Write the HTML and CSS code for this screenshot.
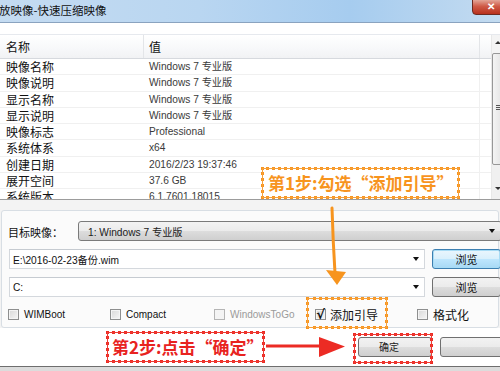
FILE: index.html
```html
<!DOCTYPE html>
<html>
<head>
<meta charset="utf-8">
<link rel="stylesheet" href="styles.css">
</head>
<body>
<div class="win">
  <div class="titlebar">
    <span class="title">放映像-快速压缩映像</span>
    <span class="close">✕</span>
  </div>
  <div class="topstrip"></div>
  <div class="listwrap">
    <div class="list">
      <div class="hdr"><div class="c1">名称</div><div class="c2">值</div><div class="c3"></div></div>
      <div class="row"><div class="c1">映像名称</div><div class="c2">Windows 7 专业版</div><div class="c3"></div></div>
      <div class="row"><div class="c1">映像说明</div><div class="c2">Windows 7 专业版</div><div class="c3"></div></div>
      <div class="row"><div class="c1">显示名称</div><div class="c2">Windows 7 专业版</div><div class="c3"></div></div>
      <div class="row"><div class="c1">显示说明</div><div class="c2">Windows 7 专业版</div><div class="c3"></div></div>
      <div class="row"><div class="c1">映像标志</div><div class="c2">Professional</div><div class="c3"></div></div>
      <div class="row"><div class="c1">系统体系</div><div class="c2">x64</div><div class="c3"></div></div>
      <div class="row"><div class="c1">创建日期</div><div class="c2">2016/2/23 19:37:46</div><div class="c3"></div></div>
      <div class="row"><div class="c1">展开空间</div><div class="c2">37.6 GB</div><div class="c3"></div></div>
      <div class="row"><div class="c1">系统版本</div><div class="c2">6.1.7601.18015</div><div class="c3"></div></div>
    </div>
    <div class="scroll">
      <div class="sb-up"></div>
      <div class="thumb"><span class="grip"></span></div>
      <div class="sb-down"></div>
    </div>
  </div>
  <div class="gap"></div>
  <div class="group">
    <div class="line1">
      <span class="lbl">目标映像：</span>
      <div class="combo"><span>1: Windows 7 专业版</span><span class="arrow"></span></div>
    </div>
    <div class="line2">
      <div class="input"><span>E:\2016-02-23备份.wim</span><span class="darrow"></span></div>
      <div class="btn focus">浏览</div>
    </div>
    <div class="line2">
      <div class="input"><span>C:</span><span class="darrow"></span></div>
      <div class="btn">浏览</div>
    </div>
    <div class="checks">
      <label class="chk"><span class="box"></span><span class="latin">WIMBoot</span></label>
      <label class="chk"><span class="box"></span><span class="latin">Compact</span></label>
      <label class="chk dis"><span class="box"></span><span class="latin">WindowsToGo</span></label>
      <label class="chk"><span class="box checked">√</span><span class="cjk">添加引导</span></label>
      <label class="chk"><span class="box"></span><span class="cjk">格式化</span></label>
    </div>
  </div>
  <div class="footer">
    <div class="ok">确定</div>
    <div class="cancel"></div>
  </div>
  <div class="bottomline"></div>
</div>

<div class="note orange note1">第1步:勾选“添加引导”</div>
<div class="note orange ring1"></div>
<div class="note red note2">第2步:点击“确定”</div>
<div class="note red ring2"></div>
<svg class="arrows" width="500" height="371" viewBox="0 0 500 371">
  <path d="M332 208 Q333 242 335 273" fill="none" stroke="#f7941e" stroke-width="3" stroke-linecap="round"/>
  <polygon points="326,270 346,272 337,285" fill="#f7941e"/>
  <path d="M266 346 L322 346" stroke="#ec2b24" stroke-width="3"/>
  <polygon points="319,337 345,346.5 319,357" fill="#ec2b24"/>
</svg>
</body>
</html>
```

FILE: styles.css
```css
html, body {
  margin: 0;
  padding: 0;
  width: 500px;
  height: 371px;
  overflow: hidden;
  background: #f3f3f3;
  font-family: "Liberation Sans", "Noto Sans CJK SC", sans-serif;
  position: relative;
}
.win {
  width: 500px;
  height: 371px;
  display: flex;
  flex-direction: column;
  overflow: hidden;
}
.titlebar {
  height: 23px;
  flex: none;
  box-sizing: border-box;
  border-bottom: 1px solid #8aa3bf;
  background: linear-gradient(90deg, #c4dbf1 0%, #b9d6f1 40%, #a6ccef 70%, #c3dbf0 100%);
  display: flex;
  justify-content: space-between;
  align-items: flex-start;
  overflow: hidden;
}
.title {
  font-family: "Noto Sans CJK SC", sans-serif;
  font-size: 11.5px;
  line-height: 21px;
  color: #111;
  margin-left: -1px;
}
.close {
  width: 43px;
  height: 14px;
  margin-right: -17px;
  margin-top: -1px;
  background: linear-gradient(180deg, #e3a597 0%, #cf5a47 45%, #b8301c 100%);
  border: 1px solid #6d2a20;
  border-radius: 0 0 4px 4px;
  color: #fff;
  font-size: 10px;
  line-height: 13px;
  text-indent: 14px;
  font-weight: bold;
}
.topstrip {
  height: 11px;
  flex: none;
  background: #fff;
}
.listwrap {
  height: 166px;
  flex: none;
  display: flex;
  background: #fff;
  border-top: 1px solid #e6e9ee;
  border-bottom: 1px solid #9c9c9c;
  box-sizing: border-box;
  overflow: hidden;
}
.list {
  width: 491px;
  flex: none;
  overflow: hidden;
}
.hdr, .row {
  display: flex;
}
.hdr {
  height: 24px;
  box-sizing: border-box;
  border-bottom: 1px solid #d6d9de;
  background: linear-gradient(180deg, #ffffff 0%, #f7f8fa 60%, #f1f2f4 100%);
  font-family: "Noto Sans CJK SC", sans-serif;
  font-size: 12px;
  line-height: 23px;
  color: #111;
}
.hdr .c1, .hdr .c2 {
  border-right: 1px solid #e3e5e8;
}
.c1 {
  width: 144px;
  box-sizing: border-box;
  padding-left: 6px;
  flex: none;
}
.c2 {
  width: 336px;
  box-sizing: border-box;
  padding-left: 5px;
  flex: none;
}
.c3 {
  flex: 1;
}
.row {
  height: 16.25px;
  box-sizing: border-box;
  border-bottom: 1px solid #f0f0f0;
  align-items: center;
}
.row .c1 {
  font-family: "Noto Sans CJK SC", sans-serif;
  font-size: 12px;
  line-height: 15px;
  color: #111;
}
.row .c2 {
  font-family: "Liberation Sans", "Noto Sans CJK SC", sans-serif;
  font-size: 10.2px;
  line-height: 15px;
  color: #3a3a3a;
  align-self: stretch;
  display: flex;
  align-items: center;
  border-right: 1px solid #f0f0f0;
}
.row .c3 {
  align-self: stretch;
}
.scroll {
  flex: 1;
  display: flex;
  flex-direction: column;
  background: #f0f0f0;
  border-left: 1px solid #e8e8e8;
}
.sb-up {
  height: 18px;
  flex: none;
  position: relative;
  background: #f4f4f4;
}
.sb-up::after {
  content: "";
  position: absolute;
  left: 3px;
  top: 6px;
  border-left: 3px solid transparent;
  border-right: 3px solid transparent;
  border-bottom: 3px solid #333;
}
.thumb {
  height: 112px;
  flex: none;
  margin-right: -4px;
  box-sizing: border-box;
  border: 1px solid #979797;
  border-radius: 2px;
  background: linear-gradient(90deg, #f4f4f4, #e2e2e2);
  position: relative;
}
.grip {
  position: absolute;
  left: 3px;
  top: 51px;
  width: 5px;
  height: 5px;
  border-top: 1px solid #555;
  border-bottom: 1px solid #555;
  box-sizing: border-box;
}
.grip::after {
  content: "";
  position: absolute;
  left: 0;
  top: 1px;
  width: 5px;
  border-top: 1px solid #555;
}
.sb-down {
  flex: 1;
  position: relative;
}
.sb-down::after {
  content: "";
  position: absolute;
  left: 3px;
  top: 22px;
  border-left: 3px solid transparent;
  border-right: 3px solid transparent;
  border-top: 3px solid #333;
}
.gap {
  height: 10px;
  flex: none;
}
.group {
  flex: none;
  height: 118px;
  box-sizing: border-box;
  margin: 0 1px;
  border: 1px solid #d8dee4;
  border-radius: 3px;
  background: #fbfbfb;
  padding: 10px 0 0 6px;
  display: flex;
  flex-direction: column;
}
.line1 {
  display: flex;
  align-items: center;
  height: 20px;
}
.lbl {
  width: 70px;
  flex: none;
  font-family: "Noto Sans CJK SC", sans-serif;
  font-size: 11px;
  color: #111;
  padding-top: 2px;
}
.combo {
  flex: 1;
  height: 20px;
  box-sizing: border-box;
  margin-right: -4px;
  border: 1px solid #7a7a7a;
  border-radius: 3px;
  background: linear-gradient(180deg, #f3f3f3 0%, #ebebeb 50%, #dddddd 51%, #cfcfcf 100%);
  display: flex;
  align-items: center;
  justify-content: space-between;
  padding: 0 6px 0 9px;
  font-size: 10.2px;
  color: #222;
}
.arrow, .darrow {
  width: 0;
  height: 0;
  border-left: 3.5px solid transparent;
  border-right: 3.5px solid transparent;
  border-top: 4px solid #111;
}
.line2 {
  display: flex;
  align-items: center;
  margin-top: 8px;
  height: 20px;
}
.input {
  width: 416px;
  height: 20px;
  flex: none;
  margin-left: 1px;
  box-sizing: border-box;
  border: 1px solid #d4d8dd;
  border-top-color: #c6cbd1;
  background: #fff;
  display: flex;
  align-items: center;
  justify-content: space-between;
  padding: 0 5px 0 3px;
  font-size: 10.2px;
  color: #111;
}
.btn {
  width: 69px;
  height: 20px;
  flex: none;
  margin-left: 7px;
  box-sizing: border-box;
  border: 1px solid #707070;
  border-radius: 3px;
  background: linear-gradient(180deg, #f2f2f2 0%, #ebebeb 50%, #dddddd 51%, #cfcfcf 100%);
  font-family: "Noto Sans CJK SC", sans-serif;
  font-size: 11px;
  line-height: 18px;
  text-align: center;
  color: #111;
}
.btn.focus {
  border-color: #3c7fb1;
  box-shadow: inset 0 0 0 1px #a8dcf5;
  background: linear-gradient(180deg, #eaf6fd 0%, #d9f0fc 50%, #bee6fd 51%, #a7d9f5 100%);
}
.checks {
  display: grid;
  grid-template-columns: 102px 104px 101px 102px auto;
  margin-top: 9px;
  height: 14px;
  align-items: center;
}
.chk {
  display: flex;
  align-items: center;
  font-size: 10px;
  color: #111;
}
.box {
  width: 11px;
  height: 11px;
  flex: none;
  box-sizing: border-box;
  border: 1px solid #8e8f8f;
  background: linear-gradient(135deg, #d8d8d8, #f6f6f6);
  box-shadow: inset 0 0 0 1px #f4f4f4;
  margin-right: 5px;
}
.box.checked {
  margin-right: 4px;
  font-family: "DejaVu Sans", sans-serif;
  font-weight: bold;
  font-size: 13px;
  line-height: 9px;
  color: #111;
  display: flex;
  justify-content: center;
}
.latin {
  font-family: "Liberation Sans", sans-serif;
  font-size: 10px;
}
.cjk {
  font-family: "Noto Sans CJK SC", sans-serif;
  font-size: 12px;
}
.chk.dis {
  color: #9a9a9a;
}
.chk.dis .box {
  border-color: #b5b5b5;
  background: #f4f4f4;
}
.footer {
  flex: 1;
  display: flex;
  align-items: flex-start;
  padding: 9px 0 0 358px;
  background: #fff;
}
.ok, .cancel {
  height: 20px;
  box-sizing: border-box;
  border: 1px solid #707070;
  border-radius: 3px;
  background: linear-gradient(180deg, #f2f2f2 0%, #ebebeb 50%, #dddddd 51%, #cfcfcf 100%);
  flex: none;
}
.ok {
  width: 74px;
  font-family: "Noto Sans CJK SC", sans-serif;
  font-size: 10px;
  line-height: 18px;
  text-indent: 20px;
  color: #222;
}
.cancel {
  width: 70px;
  margin-left: 8px;
}
.bottomline {
  height: 4px;
  flex: none;
  border-top: 1px solid #6e6e6e;
  background: #dcdcdc;
}
.note {
  position: absolute;
  box-sizing: border-box;
  font-family: "Noto Sans CJK SC", sans-serif;
  font-weight: bold;
  font-size: 17px;
  white-space: nowrap;
  background: #fff;
}
.orange {
  color: #f7941e;
  border: 3px dotted #f7941e;
  outline: 1px solid #f7a13a;
  outline-offset: -2px;
}
.red {
  color: #e8231f;
  border: 3px dotted #ec2b24;
  outline: 1px solid #ee3a33;
  outline-offset: -2px;
}
.note1 {
  left: 261px;
  top: 167px;
  width: 199px;
  height: 32px;
  line-height: 26px;
  padding-left: 4px;
}
.ring1 {
  left: 306px;
  top: 297px;
  width: 82px;
  height: 32px;
  background: transparent;
}
.note2 {
  left: 106px;
  top: 331px;
  width: 159px;
  height: 32px;
  line-height: 26px;
  padding-left: 3px;
}
.ring2 {
  left: 353px;
  top: 333px;
  width: 80px;
  height: 31px;
  background: transparent;
}
.arrows {
  position: absolute;
  left: 0;
  top: 0;
  pointer-events: none;
}
```
